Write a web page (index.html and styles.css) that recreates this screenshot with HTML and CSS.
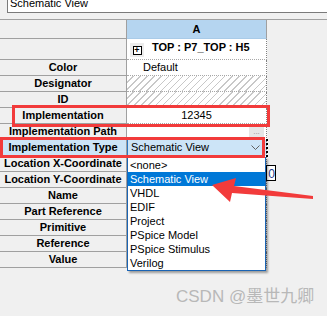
FILE: index.html
```html
<!DOCTYPE html>
<html lang="en">
<head>
  <meta charset="UTF-8">
  <title>Property Editor</title>
  <link rel="stylesheet" href="styles.css">
</head>
<body>
  <div class="namebar">
    <div class="namebox"><span>Schematic View</span></div>
  </div>

  <div class="sheet">
    <div class="label head"></div>
    <div class="cell head">A</div>

    <div class="label"></div>
    <div class="cell part">
      <span class="expand"><span class="plus">+</span></span>
      <span class="partname">TOP : P7_TOP : H5</span>
    </div>

    <div class="label">Color</div>
    <div class="cell left">Default</div>

    <div class="label">Designator</div>
    <div class="cell hatch"></div>

    <div class="label">ID</div>
    <div class="cell hatch"></div>

    <div class="label">Implementation</div>
    <div class="cell">12345</div>

    <div class="label">Implementation Path</div>
    <div class="cell path"><span class="browse">...</span></div>

    <div class="label selected">Implementation Type</div>
    <div class="cell combo">
      <span>Schematic View</span>
      <svg class="chevron" width="9" height="5" viewBox="0 0 9 5"><path d="M0.5 0.5 L4.5 4.5 L8.5 0.5" fill="none" stroke="#606060" stroke-width="1"/></svg>
    </div>

    <div class="label">Location X-Coordinate</div>
    <div class="cell"></div>

    <div class="label">Location Y-Coordinate</div>
    <div class="cell"></div>

    <div class="label">Name</div>
    <div class="cell"></div>

    <div class="label">Part Reference</div>
    <div class="cell"></div>

    <div class="label">Primitive</div>
    <div class="cell"></div>

    <div class="label">Reference</div>
    <div class="cell"></div>

    <div class="label">Value</div>
    <div class="cell"></div>
  </div>

  <!-- editor of the cell below, peeking out of the list -->
  <div class="focusmark"></div>
  <div class="peek">0</div>

  <ul class="droplist">
    <li>&lt;none&gt;</li>
    <li class="active">Schematic View</li>
    <li>VHDL</li>
    <li>EDIF</li>
    <li>Project</li>
    <li>PSpice Model</li>
    <li>PSpice Stimulus</li>
    <li>Verilog</li>
  </ul>

  <div class="mark mark-impl"></div>
  <div class="mark mark-type"></div>

  <svg class="arrow" width="327" height="316" viewBox="0 0 327 316">
    <polygon points="212,185 236,178 234,186 313,196 313,199 232,193 230,202" fill="#f23b3b"/>
  </svg>

  <div class="watermark">CSDN @墨世九卿</div>
</body>
</html>
```

FILE: styles.css
```css
body {
  margin: 0;
  width: 327px;
  height: 316px;
  overflow: hidden;
  position: relative;
  background-color: #f0f0f0;
  font-family: "Liberation Sans", Arial, "Noto Sans CJK SC", sans-serif;
  font-size: 11px;
  color: #000;
}
.namebar {
  height: 19px;
  border-bottom: 1px solid #a0a0a0;
}
.namebox {
  margin-left: 7px;
  height: 12px;
  overflow: hidden;
  background: white;
  border-left: 1px solid #7a7a7a;
  border-bottom: 1px solid #7a7a7a;
  padding-left: 2px;
}
.namebox span {
  display: block;
  margin-top: -3px;
  line-height: 13px;
}
.sheet {
  display: grid;
  grid-template-columns: 127px 140px;
  grid-template-rows: 19px 21px repeat(13, 16px);
}
.label, .cell {
  box-sizing: border-box;
  line-height: 15px;
  text-align: center;
  white-space: nowrap;
}
.label {
  font-weight: bold;
  border-right: 1px solid #a0a0a0;
  border-bottom: 1px solid #a0a0a0;
}
.label.selected {
  background-color: #cce4f7;
}
.cell {
  background: white;
  border-right: 1px dotted #808080;
  border-bottom: 1px dotted #a8a8a8;
}
.head {
  line-height: 18px;
}
.cell.head {
  background-color: #b5d5f0;
  border-right: 1px solid #a0a0a0;
  border-bottom: 1px solid #a9cbe8;
  font-weight: bold;
}
.part {
  display: flex;
  align-items: flex-start;
  padding-left: 3px;
}
.expand {
  width: 14px;
  height: 14px;
  margin-top: 4px;
  background: #ececec;
  display: flex;
  align-items: center;
  justify-content: center;
}
.plus {
  width: 7px;
  height: 7px;
  border: 1px solid #000;
  background: white;
  font-size: 9px;
  line-height: 7px;
  text-align: center;
  font-weight: bold;
}
.partname {
  font-weight: bold;
  margin-left: 8px;
  line-height: 15px;
  margin-top: 1px;
}
.left {
  text-align: left;
  padding-left: 16px;
}
.hatch {
  background: repeating-linear-gradient(135deg, #ffffff 0 4px, #c8c8c8 4px 5px);
}
.path {
  display: flex;
  justify-content: flex-end;
  padding-right: 2px;
}
.browse {
  width: 15px;
  height: 14px;
  background: #e6e6e6;
  color: #909090;
  font-size: 8px;
  line-height: 16px;
}
.combo {
  display: flex;
  align-items: center;
  justify-content: space-between;
  background-color: #cce4f7;
  border-left: 1px solid #2b78c4;
  padding: 0 6px 0 3px;
}
.chevron {
  display: block;
}
.focusmark {
  position: absolute;
  left: 266px;
  top: 139px;
  width: 0;
  height: 18px;
  border-left: 2px dotted #000;
}
.peek {
  position: absolute;
  left: 266px;
  top: 165px;
  width: 8px;
  height: 14px;
  background: white;
  border: 1px solid #000;
  line-height: 16px;
  font-size: 12px;
  text-align: right;
  color: #1a3a8a;
  overflow: hidden;
}
.droplist {
  position: absolute;
  left: 127px;
  top: 157px;
  width: 137px;
  margin: 0;
  padding: 0;
  list-style: none;
  background: white;
  border: 1px solid #1a64b4;
  box-shadow: 2px 2px 2px rgba(0, 0, 0, 0.35);
}
.droplist li {
  height: 14px;
  line-height: 14px;
  padding-left: 2px;
}
.droplist li.active {
  background-color: #0078d7;
  color: white;
}
.mark {
  position: absolute;
  box-sizing: border-box;
  border: 3px solid #f23b3b;
}
.mark-impl {
  left: 12px;
  top: 105px;
  width: 258px;
  height: 22px;
}
.mark-type {
  left: 0;
  top: 137px;
  width: 265px;
  height: 21px;
}
.arrow {
  position: absolute;
  left: 0;
  top: 0;
}
.watermark {
  position: absolute;
  left: 176px;
  top: 287px;
  font-size: 17px;
  line-height: 20px;
  color: #b8b8b8;
  white-space: nowrap;
}
```
